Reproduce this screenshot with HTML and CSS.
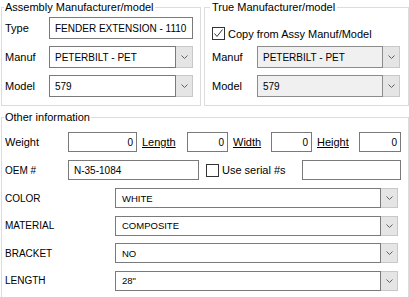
FILE: index.html
```html
<!DOCTYPE html>
<html lang="en">
<head>
    <meta charset="UTF-8">
    <title>Part Details</title>
    <link rel="stylesheet" href="styles.css">
</head>
<body>

    <div class="top">
        <fieldset class="group group-assy">
            <legend>Assembly Manufacturer/model</legend>
            <div class="row">
                <span class="lbl">Type</span>
                <div class="field">FENDER EXTENSION - 1110</div>
            </div>
            <div class="row">
                <span class="lbl">Manuf</span>
                <div class="combo">
                    <div class="combo-text">PETERBILT - PET</div>
                    <div class="combo-btn"><svg width="7" height="4" viewBox="0 0 7 4"><polyline points="0.5,0.5 3.5,3.5 6.5,0.5" fill="none" stroke="#606060"/></svg></div>
                </div>
            </div>
            <div class="row">
                <span class="lbl">Model</span>
                <div class="combo">
                    <div class="combo-text">579</div>
                    <div class="combo-btn"><svg width="7" height="4" viewBox="0 0 7 4"><polyline points="0.5,0.5 3.5,3.5 6.5,0.5" fill="none" stroke="#606060"/></svg></div>
                </div>
            </div>
        </fieldset>

        <fieldset class="group group-true">
            <legend>True Manufacturer/model</legend>
            <div class="check-row">
                <span class="box"><svg width="11" height="11" viewBox="0 0 11 11"><polyline points="1.5,5.5 4,8.5 9.5,1.5" fill="none" stroke="#333"/></svg></span>
                <span class="check-text">Copy from Assy Manuf/Model</span>
            </div>
            <div class="row">
                <span class="lbl">Manuf</span>
                <div class="combo disabled">
                    <div class="combo-text">PETERBILT - PET</div>
                    <div class="combo-btn"><svg width="7" height="4" viewBox="0 0 7 4"><polyline points="0.5,0.5 3.5,3.5 6.5,0.5" fill="none" stroke="#606060"/></svg></div>
                </div>
            </div>
            <div class="row">
                <span class="lbl">Model</span>
                <div class="combo disabled">
                    <div class="combo-text">579</div>
                    <div class="combo-btn"><svg width="7" height="4" viewBox="0 0 7 4"><polyline points="0.5,0.5 3.5,3.5 6.5,0.5" fill="none" stroke="#606060"/></svg></div>
                </div>
            </div>
        </fieldset>
    </div>

    <fieldset class="group group-other">
        <legend>Other information</legend>
        <div class="row row-small">
            <span class="lbl lbl-wide">Weight</span>
            <div class="field num w-weight">0</div>
            <span class="link lbl-length">Length</span>
            <div class="field num w-41">0</div>
            <span class="link lbl-width">Width</span>
            <div class="field num w-41">0</div>
            <span class="link lbl-height">Height</span>
            <div class="field num w-42">0</div>
        </div>
        <div class="row row-small">
            <span class="lbl lbl-wide oem">OEM #</span>
            <div class="field w-oem">N-35-1084</div>
            <span class="box box-serial"></span>
            <span class="check-text">Use serial #s</span>
            <div class="field w-serial"></div>
        </div>

        <div class="attr-list">
            <div class="row row-attr">
                <span class="attr-lbl">COLOR</span>
                <div class="combo">
                    <div class="combo-text">WHITE</div>
                    <div class="combo-btn"><svg width="7" height="4" viewBox="0 0 7 4"><polyline points="0.5,0.5 3.5,3.5 6.5,0.5" fill="none" stroke="#606060"/></svg></div>
                </div>
            </div>
            <div class="row row-attr">
                <span class="attr-lbl">MATERIAL</span>
                <div class="combo">
                    <div class="combo-text">COMPOSITE</div>
                    <div class="combo-btn"><svg width="7" height="4" viewBox="0 0 7 4"><polyline points="0.5,0.5 3.5,3.5 6.5,0.5" fill="none" stroke="#606060"/></svg></div>
                </div>
            </div>
            <div class="row row-attr">
                <span class="attr-lbl">BRACKET</span>
                <div class="combo">
                    <div class="combo-text">NO</div>
                    <div class="combo-btn"><svg width="7" height="4" viewBox="0 0 7 4"><polyline points="0.5,0.5 3.5,3.5 6.5,0.5" fill="none" stroke="#606060"/></svg></div>
                </div>
            </div>
            <div class="row row-attr">
                <span class="attr-lbl">LENGTH</span>
                <div class="combo">
                    <div class="combo-text">28"</div>
                    <div class="combo-btn"><svg width="7" height="4" viewBox="0 0 7 4"><polyline points="0.5,0.5 3.5,3.5 6.5,0.5" fill="none" stroke="#606060"/></svg></div>
                </div>
            </div>
        </div>
    </fieldset>

</body>
</html>
```

FILE: styles.css
```css
body {
    margin: 0;
    width: 409px;
    height: 297px;
    overflow: hidden;
    font-family: "Liberation Sans", Arial, sans-serif;
    font-size: 11px;
    color: #000;
    background-color: #fff;
}
.top {
    display: grid;
    grid-template-columns: 200px 205px;
    column-gap: 3px;
    padding-left: 1px;
}
.group {
    margin: 0;
    min-width: 0;
    box-sizing: border-box;
    border: 1px solid #dcdcdc;
}
.group legend {
    line-height: 14px;
    padding: 0 1px;
}
.group-assy {
    padding: 3px 7px 8px 3px;
}
.group-assy legend {
    margin-left: -1px;
}
.group-true {
    padding: 3px 8px 8px 7px;
}
.group-true legend {
    margin-left: -2px;
    padding: 0 2px;
}
.group-true .lbl {
    width: 45px;
}
.group-other {
    margin: 4px 0 0 1px;
    padding: 8px 7px 8px 3px;
}
.group-other legend {
    margin-left: -1px;
}

.row {
    display: flex;
    align-items: center;
    height: 22px;
}
.row + .row {
    margin-top: 7px;
}
.lbl {
    flex: none;
    width: 44px;
}
.check-row {
    display: flex;
    align-items: center;
    height: 13px;
    margin-top: 10px;
}
.check-row + .row {
    margin-top: 6px;
}
.box {
    flex: none;
    width: 13px;
    height: 13px;
    box-sizing: border-box;
    border: 1px solid #333;
    background-color: #fff;
}
.box svg {
    display: block;
}
.check-text {
    margin-left: 3px;
    white-space: nowrap;
}

.field {
    box-sizing: border-box;
    flex: 1;
    height: 100%;
    display: flex;
    align-items: center;
    padding: 0 5px;
    border: 1px solid #7a7a7a;
    background-color: #fff;
    font-size: 10px;
    white-space: nowrap;
    overflow: hidden;
}
.num {
    justify-content: flex-end;
    padding-right: 3px;
}
.combo {
    flex: 1;
    display: flex;
    height: 100%;
}
.combo-text {
    flex: 1;
    box-sizing: border-box;
    display: flex;
    align-items: center;
    padding: 0 5px;
    border: 1px solid #7a7a7a;
    background-color: #fff;
    font-size: 10px;
    white-space: nowrap;
}
.combo-btn {
    flex: none;
    width: 17px;
    box-sizing: border-box;
    display: flex;
    align-items: center;
    justify-content: center;
    border: 1px solid #c8c8c8;
    border-left: none;
    background-color: #e5e5e5;
}
.combo.disabled .combo-text {
    background-color: #f0f0f0;
    border-color: #8c8c8c;
}

/* other information */
.row-small {
    height: 20px;
}
.row-small + .row-small {
    margin-top: 8px;
}
.lbl-wide {
    width: 63px;
}
.oem {
    font-size: 10px;
}
.link {
    flex: none;
    margin-left: 5px;
    text-decoration: underline;
}
.lbl-length { width: 45px; }
.lbl-width { width: 38px; }
.lbl-height { width: 42px; }
.w-weight { flex: none; width: 69px; }
.w-41 { flex: none; width: 41px; }
.w-42 { flex: none; width: 42px; }
.w-oem { flex: none; width: 131px; }
.w-serial { flex: none; width: 99px; margin-left: auto; }
.box-serial {
    margin-left: 7px;
}

.attr-list {
    margin-top: 8px;
    margin-right: 3px;
}
.row-attr {
    height: 20px;
}
.row-attr + .row-attr {
    margin-top: 7.5px;
}
.attr-lbl {
    flex: none;
    width: 110px;
    font-size: 10px;
}
.row-attr .combo-text {
    font-size: 9.5px;
    padding-left: 6px;
}
```
